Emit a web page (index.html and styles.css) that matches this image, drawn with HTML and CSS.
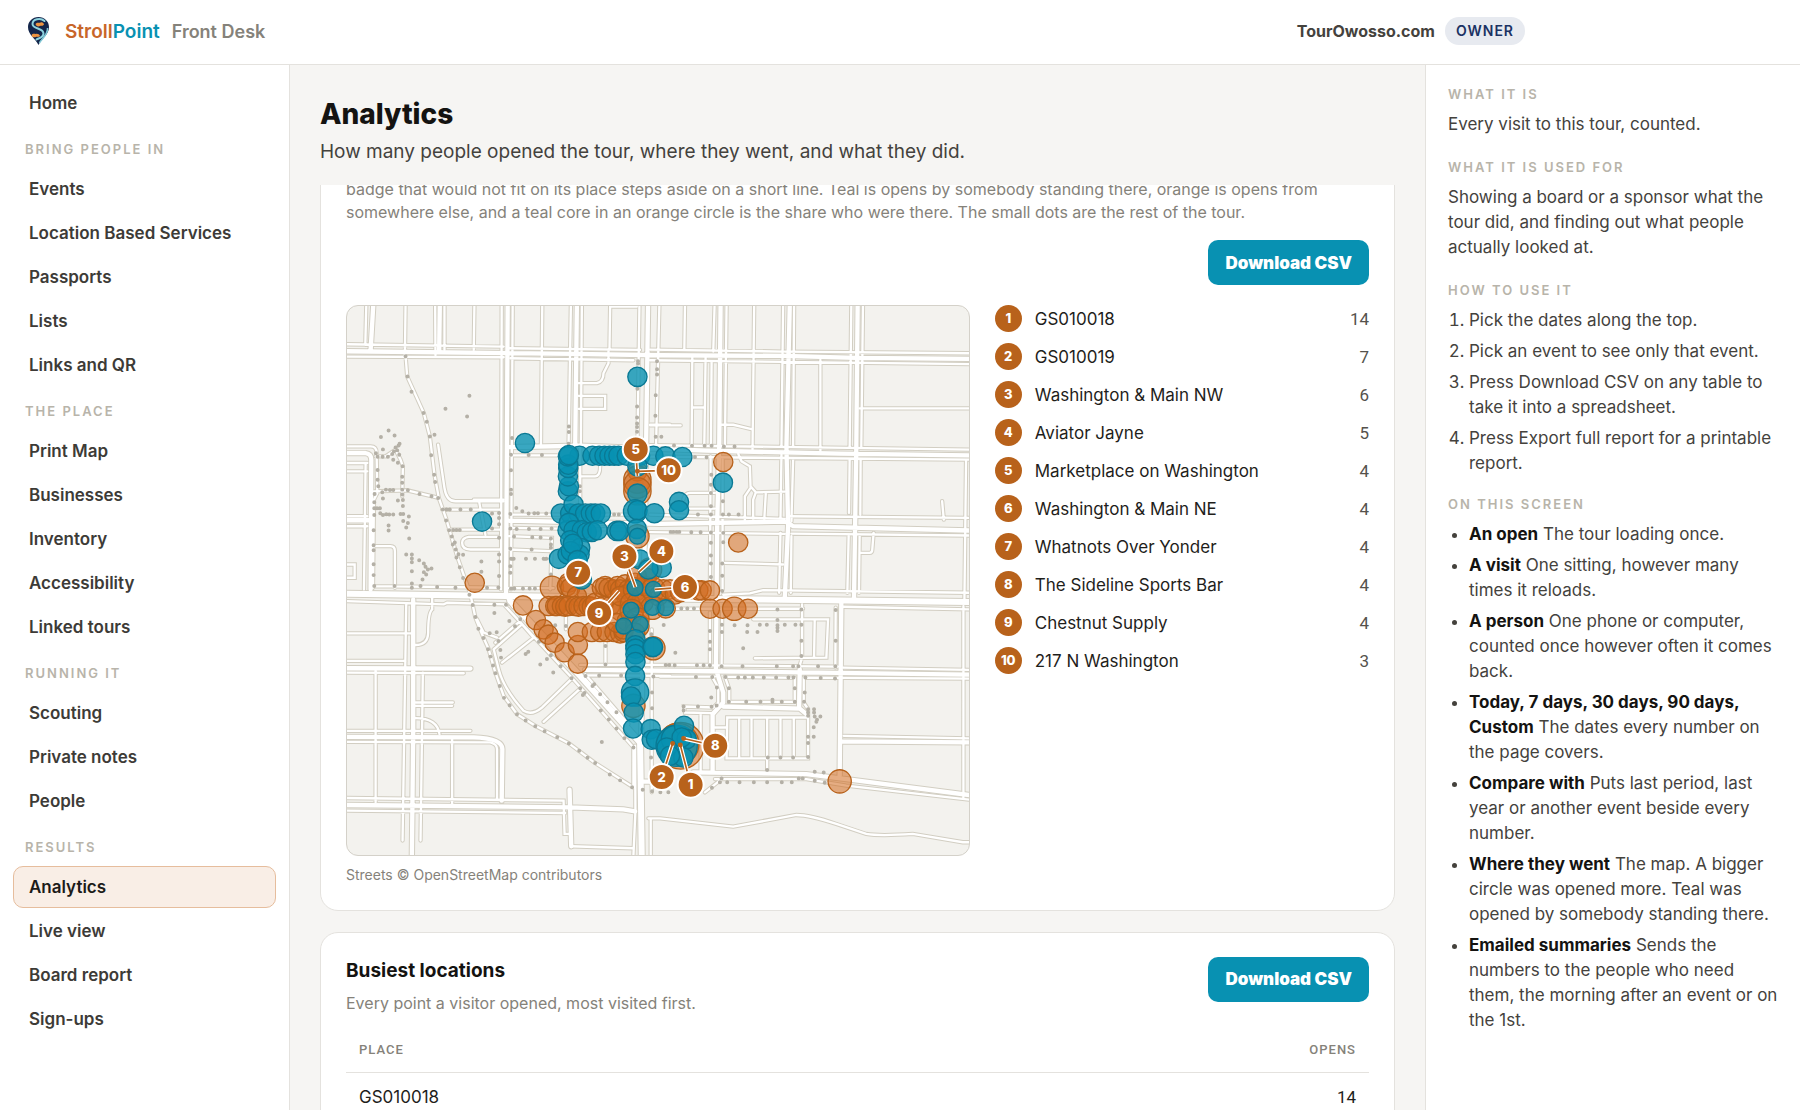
FILE: index.html
```html
<!DOCTYPE html>
<html lang="en">
<head>
<meta charset="utf-8">
<meta name="viewport" content="width=device-width, initial-scale=1">
<title>StrollPoint Front Desk – Analytics</title>
<link rel="stylesheet" href="styles.css">
</head>
<body>
<header class="topbar">
  <svg class="logo" viewBox="0 0 42 56" aria-hidden="true">
    <path d="M21 0C9 0 0 9 0 20C0 35 14 42 21 56C28 42 42 35 42 20C42 9 33 0 21 0Z" fill="#14264b"/>
    <path d="M23 52C27 43 40 36 39 22" fill="none" stroke="#7fc8d6" stroke-width="3"/>
    <path d="M15 14c3-5 8-1 10-3 3-2 7 1 7 4-3 4-6 2-8 3-4 2-8 0-9-4zM7 37c2-5 6-3 9-3 3-1 7 1 8 4-3 3-6 1-8 2-4 1-8 1-9-3z" fill="#ed9442"/>
    <path d="M33 8C25 1 9 4 9 14C9 25 31 21 31 33C31 41 22 42 17 45" fill="none" stroke="#8ed3df" stroke-width="4" stroke-linecap="round"/>
  </svg>
  <span class="brand"><span class="stroll">Stroll</span><span class="point">Point</span></span>
  <span class="product">Front Desk</span>
  <div class="account"><span class="site">TourOwosso.com</span><span class="role">OWNER</span></div>
</header>
<div class="shell">
  <nav class="sidebar" aria-label="Main">
    <a href="#">Home</a>
    <h2>BRING PEOPLE IN</h2>
    <a href="#">Events</a>
    <a href="#">Location Based Services</a>
    <a href="#">Passports</a>
    <a href="#">Lists</a>
    <a href="#">Links and QR</a>
    <h2>THE PLACE</h2>
    <a href="#">Print Map</a>
    <a href="#">Businesses</a>
    <a href="#">Inventory</a>
    <a href="#">Accessibility</a>
    <a href="#">Linked tours</a>
    <h2>RUNNING IT</h2>
    <a href="#">Scouting</a>
    <a href="#">Private notes</a>
    <a href="#">People</a>
    <h2>RESULTS</h2>
    <a href="#" class="active" aria-current="page">Analytics</a>
    <a href="#">Live view</a>
    <a href="#">Board report</a>
    <a href="#">Sign-ups</a>
  </nav>
  <main class="main">
    <div class="page-head">
      <h1>Analytics</h1>
      <p>How many people opened the tour, where they went, and what they did.</p>
    </div>
    <div class="scroller">
      <section class="card card-map">
        <p class="note">badge that would not fit on its place steps aside on a short line. Teal is opens by somebody standing there, orange is opens from somewhere else, and a teal core in an orange circle is the share who were there. The small dots are the rest of the tour.</p>
        <div class="actions"><button type="button" class="btn">Download CSV</button></div>
        <div class="map-grid">
          <figure>
            <svg class="map" viewBox="19 18 1869 1650" role="img" aria-label="Map of where visitors went">
              <defs>
                <path id="minor" d="M77 15L74 135M195 15L193 168M284 15L285 165M312 15L312 150M402 15L400 150M484 15L482 870M517 15L512 870M606 15L602 437M692 15L685 437M725 15L722 437M810 20L808 150M898 20L892 440M958 15L948 440M810 20H890
                M20 133L490 140M20 170L490 172M500 145L900 150M510 175L880 181M930 149L1330 155M1335 155L1890 160M930 181L1890 193
                M1035 15L1033 150M1124 15L1120 155M1160 15L1155 440M1243 15L1238 450M1330 15L1325 440M1363 15L1360 440M1535 15L1530 440M1570 15L1565 440M1057 170L1055 440M1097 172L1093 440M1115 185L1113 440M1057 323H1093M1442 180V455M1560 326H1890M1140 375H1180L1235 388M930 377H1022
                M930 436L1890 450M930 471L1890 480M1195 462L1205 485L1230 500L1232 560L1248 578L1335 576M1232 565L1215 590V665M1248 578L1240 600V665M1278 580L1273 665
                M1112 470L1110 870M1148 480V870M1325 465L1322 660M1360 480L1355 665M1530 480L1528 640M1563 480L1562 645M1880 480L1875 900M930 645L1335 658M1345 650L1890 655M930 698L1335 703M1355 702L1890 708M1808 605L1813 660M1560 760H1590Q1598 760 1598 750L1602 700M1155 790L1330 795M1322 700L1318 880M1355 710L1353 880M1527 710L1523 880M1560 710L1558 880M1045 627H1125M1030 600Q1035 580 1050 580H1125
                M1150 886L1230 882L1270 872L1890 880M960 928H1390M1510 922L1890 930M1240 960H1465L1460 1075L1245 1077M1425 960L1423 1075M1387 915V1075L1378 1105M1488 925L1487 1105M1110 940V1100M1147 930L1145 1105M960 1097L1495 1102M1510 1105L1890 1112M960 1132H1125M1155 1132L1365 1136M1392 1135L1890 1138M1115 1130L1135 1165V1210L1120 1225L1032 1222L1035 1240L1115 1242M1155 1132L1168 1170V1208H1365V1136M1392 1136V1210L1405 1230V1378H1160L1162 1255H1405M1198 1255V1375M1235 1255V1375M1282 1255V1375M1322 1255V1375M1362 1255V1375M1282 1378V1420M1125 1285H1160M1512 1310L1890 1318M1872 920V1495M1125 1440H1400L1520 1460L1890 1502M1145 1440L1095 1480M1082 1245V1415
                M925 1558H960L1180 1583L1370 1548Q1410 1548 1490 1575L1580 1605Q1620 1612 1720 1605L1870 1630H1890
                M15 905L310 915L320 910L500 915M15 1002H215M15 1085H195M15 1120L370 1122M105 1110V1510M197 915L186 1625M247 1120L240 1625M275 895V930Q263 940 263 1000Q262 1037 225 1037M225 1210H337M225 1220H335M225 1257Q290 1257 297 1305M15 1295H390M15 1328L450 1330Q470 1335 470 1350V1500M335 1320V1515M15 1497L670 1505L673 1605H690M15 1535L675 1542M693 1642L880 1648M885 1340L886 1537L880 1670M932 1560V1670
                M195 168L200 230L250 340L268 410L282 525L295 595L318 660L350 770L390 885L405 955L425 1005L445 1050L465 1120L490 1190L530 1245L585 1280L685 1332L765 1392L880 1465
                M410 960L430 1000L470 1015M460 1050L475 1110Q490 1170 550 1235Q575 1250 605 1225L695 1138M610 1268L720 1168M485 1090L580 1015L545 975L460 1050M465 1030L545 960M490 915L690 1130L880 1345V1460M735 1125L865 1275M720 1097H1110M735 1128L990 1130M796 990V1097M935 990V1480
                M15 440H90Q108 440 108 460L110 580L100 600L97 865M15 490H80M15 515H80M15 650H80M15 680H80M75 490L70 870M105 740H150Q163 740 163 755V865M15 795H42V835H15M97 860L480 865M105 470H135L165 450L180 480L187 500L185 590M100 575L200 572L295 595
                M293 435L312 565Q318 605 345 605H490M400 600H490M415 600L435 705M305 630H480M325 690H480M480 712H385Q365 715 365 730Q365 750 390 750H480M505 645H870M505 685L860 690M505 710L635 715L630 870M505 750L630 755M505 467H650M715 250H770Q790 245 790 220L805 190V150M715 288H795V327H715M720 530H765Q780 530 780 500M930 375H990M720 440V640M505 866H640M677 940V990"/>
                <path id="major" d="M98 15L90 150M298 15L296 155M15 154L700 162L960 166L1335 168L1550 174L1890 177M502 15L497 885L520 920M710 15L705 440M924 15L915 660L903 1330M1142 15L1138 440L1132 660L1128 1110L1150 1180V1210L1118 1245V1420M1350 15L1340 440L1345 680L1335 895M1554 15L1550 440L1543 905M1505 910L1500 1430M505 442L720 438L1100 453L1500 462L1890 467M15 460H75Q92 462 92 480L90 870M15 662H85M500 663L960 673L1340 666L1360 680L1890 693M15 1107L390 1108M735 1112L1110 1116L1890 1126M15 1313L400 1315Q486 1318 486 1350L484 1505M15 1518L690 1525L850 1531L885 1537M218 900V1300L214 1670M910 1448H960M1060 1420L1400 1425L1520 1440L1890 1488M1150 1222L1380 1228L1400 1245M1380 1110L1378 1228M1505 1327L1890 1330M688 1472L693 1642"/>
                <path id="artery" d="M15 883L500 890L960 897L1260 900L1890 908M510 905L720 1130L900 1330L905 1670"/>
              </defs>
              <g class="casing"><use href="#minor" stroke-width="13"/><use href="#major" stroke-width="19"/><use href="#artery" stroke-width="24"/></g>
              <g class="road"><use href="#minor" stroke-width="7"/><use href="#major" stroke-width="13"/><use href="#artery" stroke-width="18"/></g>
              <path class="dots" d="M195 169h0M201 230h0M213 276h0M249 340h0M259 366h0M268 410h0M282 405h0M272 467h0M281 525h0M284 547h0M293 595h0M387 288h0M315 327h0M380 350h0M144 392h0M121 412h0M162 407h0M127 449h0M177 432h0M174 437h0M165 443h0M170 452h0M176 465h0M160 455h0M155 463h0M106 461h0M111 471h0M126 471h0M142 471h0M158 480h0M172 489h0M186 500h0M111 511h0M111 540h0M113 560h0M102 583h0M185 531h0M185 549h0M185 570h0M185 585h0M187 601h0M172 603h0M187 619h0M125 578h0M136 570h0M148 571h0M158 571h0M127 597h0M101 608h0M101 626h0M109 626h0M118 626h0M101 646h0M119 641h0M127 646h0M137 644h0M146 645h0M158 645h0M180 643h0M188 643h0M205 651h0M188 664h0M202 670h0M197 684h0M144 678h0M144 693h0M99 692h0M206 717h0M99 737h0M99 752h0M99 794h0M99 827h0M202 572h0M237 583h0M273 590h0M307 630h0M318 630h0M328 630h0M360 630h0M391 630h0M317 663h0M326 692h0M338 691h0M348 691h0M358 691h0M334 711h0M343 729h0M337 735h0M346 750h0M354 764h0M368 766h0M348 774h0M358 803h0M368 836h0M423 786h0M423 817h0M197 765h0M214 765h0M214 777h0M214 788h0M236 782h0M250 792h0M255 802h0M262 810h0M273 807h0M250 818h0M257 825h0M214 815h0M246 840h0M240 860h0M214 852h0M214 865h0M101 860h0M162 860h0M290 863h0M345 865h0M387 886h0M440 865h0M474 864h0M476 640h0M476 655h0M455 642h0M476 674h0M455 687h0M476 715h0M476 765h0M476 786h0M476 830h0M512 465h0M565 466h0M605 466h0M512 512h0M512 570h0M512 583h0M510 643h0M528 625h0M546 635h0M565 642h0M582 641h0M593 641h0M618 642h0M510 687h0M529 688h0M566 688h0M601 688h0M634 687h0M521 711h0M576 713h0M601 714h0M632 717h0M510 748h0M574 750h0M632 735h0M632 745h0M512 778h0M520 778h0M557 778h0M584 778h0M610 778h0M618 778h0M510 800h0M510 820h0M632 825h0M512 867h0M522 867h0M548 867h0M568 867h0M584 867h0M515 415h0M686 380h0M686 397h0M685 432h0M719 560h0M719 575h0M822 645h0M836 645h0M894 184h0M894 191h0M892 267h0M891 320h0M891 353h0M891 371h0M891 382h0M891 396h0M951 184h0M951 208h0M951 224h0M947 286h0M946 348h0M947 411h0M964 411h0M1002 437h0M1056 438h0M1094 438h0M1115 438h0M1152 440h0M1184 440h0M1065 472h0M1100 473h0M1114 525h0M1113 555h0M1113 580h0M1113 620h0M1074 645h0M1113 645h0M1149 605h0M1149 645h0M1167 645h0M1196 645h0M992 697h0M1000 697h0M1010 697h0M1018 697h0M1054 698h0M1082 698h0M1113 699h0M1113 730h0M1113 768h0M1113 792h0M1113 833h0M1150 700h0M1150 728h0M1147 792h0M1147 829h0M1147 875h0
              M397 917h0M405 953h0M414 988h0M429 1016h0M448 1002h0M469 999h0M474 1025h0M443 1050h0M450 1072h0M458 1099h0M465 1122h0M480 1052h0M482 1075h0M478 1160h0M491 1196h0M508 1218h0M530 1245h0M556 1264h0M585 1281h0M613 1296h0M651 1314h0M686 1333h0M717 1355h0M742 1376h0M765 1392h0M809 1426h0M840 1444h0M876 1465h0M908 1472h0M936 1477h0M961 1480h0M985 1480h0M462 916h0M497 916h0M462 941h0M507 965h0M524 981h0M540 960h0M596 1027h0M556 1064h0M564 1057h0M620 1079h0M600 1096h0M639 1120h0M632 1068h0M661 1101h0M694 1137h0M720 1167h0M728 1187h0M733 1181h0M736 1130h0M757 1160h0M762 1155h0M780 1185h0M802 1209h0M829 1239h0M782 1234h0M806 1261h0M829 1288h0M853 1317h0M785 1329h0M880 1345h0M777 1129h0M843 1129h0M940 1132h0M796 1040h0M796 1096h0M677 980h0M645 978h0M934 1005h0M971 977h0M977 1097h0M988 1097h0M936 1180h0M936 1227h0M933 1375h0M1006 1060h0M1004 1098h0M1071 1098h0M1091 1098h0M1110 1098h0M1145 1101h0M1208 1101h0M1311 1101h0M1360 1101h0M1376 1101h0M1435 1101h0M1487 1101h0M1068 1133h0M1117 1133h0M1157 1133h0M1195 1135h0M1215 1135h0M1239 1135h0M1272 1135h0M1309 1135h0M1346 1135h0M1361 1135h0M1397 1135h0M1443 1136h0M1486 1138h0M1131 1165h0M1167 1167h0M1365 1167h0M1395 1180h0M1393 1208h0M1167 1208h0M1219 1208h0M1262 1208h0M1298 1202h0M1298 1208h0M1326 1208h0M1365 1208h0M1114 1195h0M1115 1223h0M1130 1219h0M1031 1222h0M1074 1222h0M1031 1234h0M1024 927h0M1042 927h0M1062 927h0M1146 976h0M1146 998h0M1184 978h0M1223 978h0M1222 998h0M1253 998h0M1260 976h0M1281 976h0M1313 962h0M1313 930h0M1313 978h0M1313 985h0M1313 995h0M1335 976h0M1367 976h0M1385 976h0M1385 930h0M1488 932h0M1488 1024h0M1385 1024h0M1385 1070h0M1210 1047h0M1110 995h0M1110 1027h0M1110 1050h0M1405 1230h0M1405 1240h0M1405 1250h0M1423 1230h0M1423 1240h0M1425 1252h0M1432 1262h0M1442 1252h0M1430 1268h0M1422 1284h0M1422 1313h0M1405 1313h0M1405 1332h0M1405 1374h0M1284 1375h0M1322 1375h0M1360 1375h0M1282 1413h0M1425 1418h0M1452 1420h0M1145 1438h0M1140 1450h0M1162 1450h0M1199 1450h0M1242 1450h0M1282 1450h0M1326 1450h0M1356 1450h0M1377 1438h0M1389 1438h0M1425 1445h0M1455 1451h0M1116 1466h0"/>
              <g class="away">
                <circle cx="403" cy="850"/><circle cx="1150" cy="487"/><circle cx="1195" cy="729"/><circle cx="1500" cy="1447" class="lg"/><circle cx="880" cy="1220" class="lg"/><circle cx="1022" cy="1340" class="xl"/><circle cx="1015" cy="1335" class="hub"/>
                <g transform="translate(540 390)">
                  <circle cx="8" cy="528"/><circle cx="47" cy="572"/><circle cx="70" cy="600"/><circle cx="84" cy="616"/><circle cx="103" cy="640"/><circle cx="133" cy="669"/><circle cx="173" cy="703"/><circle cx="173" cy="647"/><circle cx="173" cy="608"/>
                  <circle cx="95" cy="475" class="lg"/><circle cx="145" cy="460"/><circle cx="140" cy="470"/><circle cx="150" cy="475"/><circle cx="200" cy="490"/><circle cx="170" cy="500"/><circle cx="85" cy="530"/><circle cx="105" cy="530"/><circle cx="110" cy="530"/><circle cx="125" cy="530"/><circle cx="135" cy="532"/><circle cx="145" cy="530"/><circle cx="165" cy="530"/><circle cx="175" cy="532"/><circle cx="190" cy="530"/><circle cx="205" cy="530"/><circle cx="215" cy="532"/><circle cx="225" cy="520"/><circle cx="250" cy="530"/><circle cx="270" cy="530"/><circle cx="290" cy="525"/><circle cx="300" cy="545"/>
                  <circle cx="215" cy="608"/><circle cx="240" cy="608"/><circle cx="260" cy="608"/><circle cx="283" cy="608"/><circle cx="300" cy="612"/><circle cx="310" cy="608"/><circle cx="310" cy="600"/><circle cx="290" cy="580"/><circle cx="320" cy="575"/>
                  <circle cx="245" cy="475"/><circle cx="255" cy="470"/><circle cx="265" cy="475"/><circle cx="280" cy="480"/><circle cx="292" cy="470"/><circle cx="300" cy="480"/><circle cx="315" cy="465"/><circle cx="325" cy="480"/><circle cx="320" cy="495"/><circle cx="300" cy="500"/><circle cx="345" cy="460"/><circle cx="345" cy="480" class="lg"/><circle cx="365" cy="500"/><circle cx="370" cy="520"/><circle cx="330" cy="520"/><circle cx="350" cy="520"/><circle cx="375" cy="470"/><circle cx="380" cy="445"/><circle cx="350" cy="440"/>
                  <circle cx="390" cy="420" class="lg"/><circle cx="400" cy="480" class="lg"/><circle cx="415" cy="500"/><circle cx="430" cy="480"/><circle cx="450" cy="480"/><circle cx="465" cy="495"/><circle cx="480" cy="488"/><circle cx="510" cy="480"/><circle cx="535" cy="483"/><circle cx="545" cy="483"/><circle cx="570" cy="483"/>
                  <circle cx="570" cy="538"/><circle cx="608" cy="538"/><circle cx="643" cy="538" class="lg"/><circle cx="684" cy="538"/>
                  <circle cx="397" cy="535" class="lg"/><circle cx="437" cy="537"/><circle cx="335" cy="545" class="lg"/><circle cx="400" cy="657" class="lg"/><circle cx="352" cy="320" class="lg"/><circle cx="352" cy="125"/><circle cx="352" cy="150" class="xm"/><circle cx="352" cy="165" class="xm"/><circle cx="352" cy="185" class="xm"/><circle cx="352" cy="570" class="lg"/><circle cx="352" cy="590" class="lg"/><circle cx="345" cy="610"/>
                </g>
              </g>
              <g class="here">
                <circle cx="892" cy="231"/><circle cx="554" cy="430"/><circle cx="425" cy="666"/><circle cx="1149" cy="549"/><circle cx="1017" cy="607"/><circle cx="1017" cy="632"/>
                <circle cx="718" cy="468"/><circle cx="757" cy="468"/><circle cx="777" cy="468"/><circle cx="793" cy="468"/><circle cx="808" cy="468"/><circle cx="822" cy="468"/><circle cx="835" cy="468"/><circle cx="860" cy="468"/><circle cx="900" cy="468"/><circle cx="940" cy="468"/><circle cx="976" cy="470"/><circle cx="1027" cy="472"/>
                <circle cx="683" cy="575"/><circle cx="686" cy="560"/><circle cx="683" cy="530"/><circle cx="684" cy="505"/><circle cx="684" cy="495"/><circle cx="683" cy="470"/><circle cx="686" cy="466"/>
                <circle cx="662" cy="642"/><circle cx="690" cy="642"/><circle cx="700" cy="615"/><circle cx="715" cy="642"/><circle cx="735" cy="642"/><circle cx="752" cy="642"/><circle cx="765" cy="642"/><circle cx="782" cy="642"/>
                <circle cx="682" cy="692"/><circle cx="686" cy="670"/><circle cx="700" cy="692"/><circle cx="725" cy="692"/><circle cx="740" cy="698"/><circle cx="755" cy="697"/><circle cx="772" cy="692"/><circle cx="830" cy="694"/><circle cx="838" cy="694"/><circle cx="690" cy="722"/><circle cx="720" cy="745"/><circle cx="718" cy="765"/><circle cx="656" cy="778"/><circle cx="682" cy="765"/><circle cx="692" cy="755"/><circle cx="698" cy="733"/><circle cx="712" cy="782"/><circle cx="725" cy="840"/>
                <circle cx="892" cy="500"/><circle cx="892" cy="582"/><circle cx="885" cy="635" class="lg"/><circle cx="892" cy="632"/><circle cx="943" cy="641"/><circle cx="890" cy="688"/><circle cx="892" cy="710" class="sm"/><circle cx="900" cy="780"/><circle cx="965" cy="805"/><circle cx="925" cy="810"/>
                <circle cx="885" cy="865" class="sm"/><circle cx="940" cy="870" class="sm"/><circle cx="873" cy="932" class="sm"/><circle cx="937" cy="924" class="sm"/><circle cx="977" cy="925" class="sm"/><circle cx="851" cy="980" class="sm"/><circle cx="900" cy="975" class="sm"/>
                <circle cx="886" cy="1020"/><circle cx="886" cy="1038"/><circle cx="886" cy="1048"/><circle cx="886" cy="1065"/><circle cx="886" cy="1088"/><circle cx="885" cy="1130"/><circle cx="937" cy="1043"/><circle cx="939" cy="1043"/><circle cx="885" cy="1180" class="xm"/><circle cx="873" cy="1192"/><circle cx="881" cy="1240"/><circle cx="879" cy="1288"/><circle cx="932" cy="1290"/><circle cx="935" cy="1322"/><circle cx="948" cy="1320"/>
                <circle cx="1010" cy="1340" class="hub"/><circle cx="1005" cy="1320" class="xm"/><circle cx="1032" cy="1280"/><circle cx="1040" cy="1320"/><circle cx="1030" cy="1375"/><circle cx="1025" cy="1315"/><circle cx="980" cy="1345"/><circle cx="990" cy="1370"/>
              </g>
              <g>
                <path class="lead-edge" d="M887 449L892 530M986 512L892 515M853 771L886 863M964 755L897 817M1035 863L944 870M777 941L836 875M1126 1340L1031 1318M1052 1457L1021 1338M965 1434L998 1333"/>
                <path class="lead" d="M887 449L892 530M986 512L892 515M853 771L886 863M964 755L897 817M1035 863L944 870M777 941L836 875M1126 1340L1031 1318M1052 1457L1021 1338M965 1434L998 1333"/>
                <path class="tip" d="M892 515h0M1031 1318h0M1021 1338h0M998 1333h0"/>
              </g>
              <g class="pins">
                <circle cx="986" cy="512"/><text x="986" y="526">10</text>
                <circle cx="887" cy="449"/><text x="887" y="463">5</text>
                <circle cx="964" cy="755"/><text x="964" y="769">4</text>
                <circle cx="853" cy="771"/><text x="853" y="785">3</text>
                <circle cx="714" cy="820"/><text x="714" y="834">7</text>
                <circle cx="1035" cy="863"/><text x="1035" y="877">6</text>
                <circle cx="777" cy="941"/><text x="777" y="955">9</text>
                <circle cx="1126" cy="1340"/><text x="1126" y="1354">8</text>
                <circle cx="965" cy="1434"/><text x="965" y="1448">2</text>
                <circle cx="1052" cy="1457"/><text x="1052" y="1471">1</text>
              </g>
            </svg>
            <figcaption>Streets © OpenStreetMap contributors</figcaption>
          </figure>
          <ol class="ranks">
            <li><b>1</b><span>GS010018</span><i>14</i></li>
            <li><b>2</b><span>GS010019</span><i>7</i></li>
            <li><b>3</b><span>Washington &amp; Main NW</span><i>6</i></li>
            <li><b>4</b><span>Aviator Jayne</span><i>5</i></li>
            <li><b>5</b><span>Marketplace on Washington</span><i>4</i></li>
            <li><b>6</b><span>Washington &amp; Main NE</span><i>4</i></li>
            <li><b>7</b><span>Whatnots Over Yonder</span><i>4</i></li>
            <li><b>8</b><span>The Sideline Sports Bar</span><i>4</i></li>
            <li><b>9</b><span>Chestnut Supply</span><i>4</i></li>
            <li><b>10</b><span>217 N Washington</span><i>3</i></li>
          </ol>
        </div>
      </section>
      <section class="card">
        <div class="card-head">
          <div>
            <h2>Busiest locations</h2>
            <p>Every point a visitor opened, most visited first.</p>
          </div>
          <button type="button" class="btn">Download CSV</button>
        </div>
        <table>
          <thead><tr><th scope="col">PLACE</th><th scope="col" class="num">OPENS</th></tr></thead>
          <tbody><tr><td>GS010018</td><td class="num">14</td></tr></tbody>
        </table>
      </section>
    </div>
  </main>
  <aside class="help">
    <h2>WHAT IT IS</h2>
    <p>Every visit to this tour, counted.</p>
    <h2>WHAT IT IS USED FOR</h2>
    <p>Showing a board or a sponsor what the tour did, and finding out what people actually looked at.</p>
    <h2>HOW TO USE IT</h2>
    <ol>
      <li>Pick the dates along the top.</li>
      <li>Pick an event to see only that event.</li>
      <li>Press Download CSV on any table to take it into a spreadsheet.</li>
      <li>Press Export full report for a printable report.</li>
    </ol>
    <h2>ON THIS SCREEN</h2>
    <ul>
      <li><b>An open</b> The tour loading once.</li>
      <li><b>A visit</b> One sitting, however many times it reloads.</li>
      <li><b>A person</b> One phone or computer, counted once however often it comes back.</li>
      <li><b>Today, 7 days, 30 days, 90 days, Custom</b> The dates every number on the page covers.</li>
      <li><b>Compare with</b> Puts last period, last year or another event beside every number.</li>
      <li><b>Where they went</b> The map. A bigger circle was opened more. Teal was opened by somebody standing there.</li>
      <li><b>Emailed summaries</b> Sends the numbers to the people who need them, the morning after an event or on the 1st.</li>
    </ul>
  </aside>
</div>
</body>
</html>
```
FILE: styles.css
```css
* { box-sizing: border-box; }
body {
  margin: 0;
  height: 100vh;
  display: flex;
  flex-direction: column;
  overflow: hidden;
  background: #f6f5f3;
  color: #44423d;
  font-family: Inter, "Liberation Sans", sans-serif;
  font-size: 17px;
}
h1, h2, p, ol, ul, figure { margin: 0; padding: 0; }

.topbar {
  display: flex;
  align-items: center;
  flex: none;
  height: 65px;
  padding: 0 275px 2px 28px;
  background: #fff;
  border-bottom: 1px solid #e4e2de;
  font-weight: 600;
}
.logo { width: 21px; height: 28px; margin-right: 16px; }
.brand { font-size: 19px; }
.stroll { color: #c8662a; }
.point { color: #0891b2; }
.product { margin-left: 12px; font-size: 18px; color: #85827a; }
.account { display: flex; align-items: center; gap: 10px; margin-left: auto; }
.site { font-size: 16px; font-weight: 700; }
.role {
  padding: 0 11px;
  border-radius: 14px;
  background: #e7eaf0;
  color: #1b3263;
  font-size: 14px;
  line-height: 28px;
  letter-spacing: 1px;
}

.shell { display: flex; flex: 1; min-height: 0; }

.sidebar {
  display: flex;
  flex-direction: column;
  gap: 2px;
  flex: none;
  width: 290px;
  padding: 17px 13px;
  background: #fff;
  border-right: 1px solid #e4e2de;
}
.sidebar a {
  padding: 0 15px;
  border: 1px solid transparent;
  border-radius: 10px;
  color: #3d3b37;
  font-weight: 600;
  line-height: 40px;
  text-decoration: none;
}
.sidebar a.active { background: #f9eee6; border-color: #e6bd9d; color: #1c1b19; }
.sidebar h2, .help h2 {
  color: #b8b4aa;
  font-size: 13px;
  font-weight: 600;
  line-height: 16px;
  letter-spacing: 2px;
}
.sidebar h2 { padding: 15px 12px 9px; }

.main { display: flex; flex-direction: column; flex: 1; min-width: 0; padding: 0 30px; }
.page-head { flex: none; height: 120px; padding-top: 31px; }
.page-head h1 { color: #141311; font-size: 28px; line-height: 36px; font-weight: 800; }
.page-head p { margin-top: 8px; font-size: 19px; line-height: 24px; }
.scroller { flex: 1; min-height: 0; overflow: hidden; }

.card {
  margin-bottom: 21px;
  padding: 24px 25px;
  background: #fff;
  border: 1px solid #e4e2de;
  border-radius: 18px;
}
.card-map { margin-top: -32px; }
.note, .card-head p { color: #85827a; font-size: 16px; line-height: 23px; }
.actions { display: flex; justify-content: flex-end; margin: 16px 0 20px; }
.btn {
  height: 45px;
  padding: 0 17px;
  border: 0;
  border-radius: 10px;
  background: #0891b2;
  color: #fff;
  font-family: inherit;
  font-size: 17px;
  font-weight: 900;
}

.map-grid { display: grid; grid-template-columns: 5fr 3fr; gap: 25px; align-items: start; }
.map { display: block; width: 100%; background: #f3f2ee; border: 1px solid #d4d1c9; border-radius: 12px; }
figcaption { margin-top: 8px; color: #85827a; font-size: 14px; line-height: 22px; }
.casing, .road { fill: none; stroke-linecap: round; }
.casing { stroke: #d2cec2; }
.road { stroke: #fff; }
.dots { fill: none; stroke: #b4b0a6; stroke-width: 12px; stroke-linecap: round; }
.away circle { r: 29px; fill: #d2691e; fill-opacity: 0.55; stroke: #b8621b; stroke-width: 4px; }
.here circle { r: 29px; fill: #0891b2; fill-opacity: 0.8; stroke: #0a7994; stroke-width: 4px; }
.away .lg, .here .lg { r: 35px; }
.here .sm { r: 24px; }
.away .xm, .here .xm { r: 41px; }
.away .xl { r: 70px; }
.away .hub, .here .hub { r: 62px; }
.lead-edge { fill: none; stroke: #fff; stroke-width: 12px; }
.lead { fill: none; stroke: #b8621b; stroke-width: 5px; }
.tip { stroke: #b8621b; stroke-width: 15px; stroke-linecap: round; }
.pins circle { r: 39px; fill: #b8621b; stroke: #fff; stroke-width: 6px; }
.pins text { fill: #fff; font-size: 39px; font-weight: 800; text-anchor: middle; }

.ranks { list-style: none; }
.ranks li { display: flex; align-items: center; gap: 13px; height: 27px; margin-bottom: 11px; color: #1f1e1b; }
.ranks b {
  width: 27px;
  border-radius: 50%;
  background: #b8621b;
  color: #fff;
  font-size: 13px;
  font-weight: 800;
  line-height: 27px;
  text-align: center;
}
.ranks span { flex: 1; }
.ranks i, td.num { font-family: Roboto, sans-serif; font-style: normal; font-size: 17px; }
.ranks i { color: #55524c; }

.card-head { display: flex; justify-content: space-between; align-items: flex-start; }
.card-head h2 { margin-bottom: 7px; color: #141311; font-size: 19px; line-height: 28px; font-weight: 700; }
table { width: 100%; margin-top: 13px; border-collapse: collapse; color: #1f1e1b; }
th {
  padding: 12px 13px;
  border-bottom: 1px solid #e4e2de;
  color: #85827a;
  font-family: Roboto, sans-serif;
  font-size: 13px;
  font-weight: 500;
  line-height: 20px;
  letter-spacing: 1px;
  text-align: left;
}
td { padding: 11px 13px; line-height: 26px; }
th.num, td.num { text-align: right; }

.help {
  flex: none;
  width: 375px;
  padding: 21px 21px 21px 22px;
  background: #fff;
  border-left: 1px solid #e4e2de;
  line-height: 25px;
}
.help h2 { margin-bottom: 10px; }
.help p { margin-bottom: 22px; }
.help ol { margin-bottom: 20px; }
.help ol, .help ul { padding-left: 21px; }
.help li + li { margin-top: 6px; }
.help b { color: #141311; font-weight: 700; }
```
